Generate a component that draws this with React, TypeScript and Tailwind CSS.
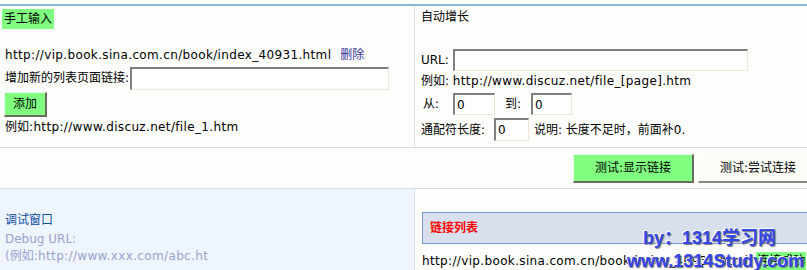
import React from "react";

const inset =
  "bg-white border-t-2 border-l-2 border-b border-r border-t-[#7f7f7f] border-l-[#7f7f7f] border-b-[#ebe8d8] border-r-[#ebe8d8] px-[2px] text-[12px] leading-[18px] outline-none font-['DejaVu_Sans','Noto_Sans_CJK_SC',sans-serif]";

const outsetGreen =
  "bg-[#80ff80] border-t border-l border-t-[#e8ffe8] border-l-[#e8ffe8] border-b-2 border-r-2 border-b-[#6b6b60] border-r-[#6b6b60] text-[12px] text-black flex items-center justify-center";

function L({ children }: { children: React.ReactNode }) {
  return <span className="tracking-[0.35px]">{children}</span>;
}

export default function App() {
  return (
    <div className="relative w-[807px] h-[270px] overflow-hidden bg-[#fdfdfb] text-[12px] text-black font-['DejaVu_Sans','Noto_Sans_CJK_SC',sans-serif]">
      <div className="w-[824px]">
        <div className="h-[4px]" />
        <div className="h-[2px] bg-[#8ab6d6]" />
        {/* top section */}
        <div className="flex h-[142px] border-b border-[#d6dce6]">
          <div className="w-[415px] border-r border-[#d6dce6] shrink-0">
            <div className="mt-[3px] ml-[2px] inline-block h-[20px] leading-[20px] px-[2px] bg-[#80ff80]">
              手工输入
            </div>
            <div className="mt-[18px] pl-[5px] leading-[16px] whitespace-nowrap">
              <L>http://vip.book.sina.com.cn/book/index_40931.html</L>
              <span className="ml-[9px] text-[#333399]">删除</span>
            </div>
            <div className="mt-[3px] pl-[5px] flex items-center h-[24px] whitespace-nowrap">
              <span>增加新的列表页面链接:</span>
              <input className={inset + " w-[259px] h-[23px] ml-[1px]"} />
            </div>
            <button className={outsetGreen + " mt-[2px] ml-[4px] w-[43px] h-[25px]"}>添加</button>
            <div className="mt-[2px] pl-[5px] leading-[16px] whitespace-nowrap">
              例如<L>:http://www.discuz.net/file_1.htm</L>
            </div>
          </div>
          <div className="flex-1 pl-[6px]">
            <div className="mt-[3px] leading-[16px]">自动增长</div>
            <div className="mt-[24px] flex items-center h-[22px]">
              <span className="w-[32px]">URL:</span>
              <input className={inset + " w-[295px] h-[22px]"} />
            </div>
            <div className="mt-[2px] leading-[16px] whitespace-nowrap">
              例如: <L>http://www.discuz.net/file_[page].htm</L>
            </div>
            <div className="mt-[4px] flex items-center h-[22px]">
              <span className="w-[32px] pl-[2px]">从:</span>
              <input className={inset + " w-[42px] h-[22px]"} defaultValue="0" />
              <span className="ml-[10px] w-[26px]">到:</span>
              <input className={inset + " w-[41px] h-[22px]"} defaultValue="0" />
            </div>
            <div className="mt-[3px] flex items-center h-[23px] whitespace-nowrap">
              <span className="w-[73px]">通配符长度:</span>
              <input className={inset + " w-[35px] h-[23px]"} defaultValue="0" />
              <span className="ml-[5px]">说明: 长度不足时，前面补0.</span>
            </div>
          </div>
        </div>
        {/* button row */}
        <div className="h-[41px] border-b border-[#d6dce6] flex items-center justify-end pr-[5px] gap-[4px]">
          <button className={outsetGreen + " w-[121px] h-[29px]"}>测试:显示链接</button>
          <button className="w-[121px] h-[29px] bg-[#fdfdf8] border-t border-l border-t-white border-l-white border-b-2 border-r-2 border-b-[#8a8a80] border-r-[#8a8a80] text-[12px] text-black flex items-center justify-center">
            测试:尝试连接
          </button>
        </div>
        {/* bottom */}
        <div className="flex h-[81px]">
          <div className="w-[415px] shrink-0 bg-[#eff5fe] border-r border-[#d6dce6] pl-[5px]">
            <div className="mt-[23px] leading-[16px] text-[#0b4f9e]">调试窗口</div>
            <div className="mt-[3px] leading-[17px] text-[#97a3cc]">Debug URL:</div>
            <div className="leading-[17px] text-[#97a3cc] whitespace-nowrap">
              (例如<L>:http://www.xxx.com/abc.ht</L>
            </div>
          </div>
          <div className="flex-1 pl-[7px]">
            <div className="mt-[23px] h-[32px] bg-[#d8e0ee] border border-[#7c9acc] flex items-center pl-[7px]">
              <span className="font-bold text-[#ff0000]">链接列表</span>
            </div>
            <div className="mt-[8px] leading-[16px] whitespace-nowrap flex items-center">
              <L>http://vip.book.sina.com.cn/book/index_40931.html</L>
              <span className="ml-[8px] bg-[#80ff80] px-[1px] leading-[18px]">连接成功</span>
            </div>
          </div>
        </div>
      </div>
      {/* watermark */}
      <div className="absolute left-[627px] top-[227px] w-[180px] font-['Liberation_Sans','Noto_Sans_CJK_SC',sans-serif] font-bold text-[18px] leading-[23px] text-[#3347ec] [text-shadow:1px_1px_1px_#777,-1px_-1px_0_#fff]">
        <div className="pl-[16px] whitespace-nowrap">by：1314学习网</div>
        <div className="whitespace-nowrap">www.1314Study.com</div>
      </div>
    </div>
  );
}
